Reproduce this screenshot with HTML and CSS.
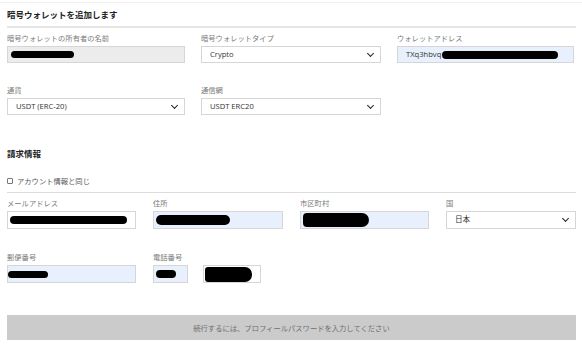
FILE: index.html
```html
<!DOCTYPE html>
<html lang="ja">
<head>
<meta charset="utf-8">
<link rel="stylesheet" href="styles.css">
</head>
<body>
<div class="page">
  <div class="topline"></div>
  <h2 class="title">暗号ウォレットを追加します</h2>
  <div class="grid3">
    <div class="field">
      <div class="label">暗号ウォレットの所有者の名前</div>
      <div class="input disabled"><span class="redact r-name"></span></div>
    </div>
    <div class="field">
      <div class="label">暗号ウォレットタイプ</div>
      <div class="input select"><span class="val">Crypto</span><span class="chev"></span></div>
    </div>
    <div class="field">
      <div class="label">ウォレットアドレス</div>
      <div class="input auto"><span class="val">TXq3hbvq</span><span class="redact r-addr"></span></div>
    </div>
    <div class="field">
      <div class="label">通貨</div>
      <div class="input select"><span class="val">USDT (ERC-20)</span><span class="chev"></span></div>
    </div>
    <div class="field">
      <div class="label">通信網</div>
      <div class="input select"><span class="val">USDT ERC20</span><span class="chev"></span></div>
    </div>
  </div>

  <h2 class="title2">請求情報</h2>
  <label class="check"><span class="box"></span>アカウント情報と同じ</label>
  <div class="grid4">
    <div class="field">
      <div class="label">メールアドレス</div>
      <div class="input white"><span class="redact r-mail"></span></div>
    </div>
    <div class="field">
      <div class="label">住所</div>
      <div class="input auto"><span class="redact r-street"></span></div>
    </div>
    <div class="field">
      <div class="label">市区町村</div>
      <div class="input auto"><span class="redact r-city"></span></div>
    </div>
    <div class="field">
      <div class="label">国</div>
      <div class="input select white"><span class="val">日本</span><span class="chev"></span></div>
    </div>
    <div class="field">
      <div class="label">郵便番号</div>
      <div class="input auto"><span class="redact r-zip"></span></div>
    </div>
    <div class="field">
      <div class="label">電話番号</div>
      <div class="phone">
        <div class="input auto code"><span class="redact r-code"></span></div>
        <div class="input white num"><span class="redact r-num"></span></div>
      </div>
    </div>
  </div>

  <div class="btn">続行するには、プロフィールパスワードを入力してください</div>
</div>
</body>
</html>
```

FILE: styles.css
```css
* { box-sizing: border-box; }
html, body { margin: 0; padding: 0; background: #fff; }
body {
  font-family: "Open Sans", "Noto Sans CJK JP", sans-serif;
  color: #333;
  width: 582px;
  height: 346px;
  overflow: hidden;
}
.page { padding: 0 6px 0 7px; }
.topline { height: 1px; background: #f0f0f0; margin: 2px -7px 0 -7px; }
.title {
  margin: 0;
  font-size: 8.5px;
  font-weight: 700;
  color: #222;
  line-height: 12px;
  padding-top: 6px;
  padding-bottom: 5px;
  border-bottom: 2px solid #e6e6e6;
}
.grid3 {
  display: grid;
  grid-template-columns: 178px 180px 177px;
  column-gap: 16px;
  row-gap: 22px;
  margin-top: 5px;
}
.field { display: flex; flex-direction: column; }
.label {
  font-size: 7.3px;
  color: #7a7a7a;
  line-height: 10px;
  height: 10px;
  margin-bottom: 3px;
}
.input {
  height: 17px;
  border: 1px solid #d6d6d6;
  background: #fff;
  display: flex;
  align-items: center;
  padding: 0 8px;
  font-size: 7.6px;
  color: #333;
  position: relative;
}
.input.disabled { background: #ececec; }
.input.auto { background: #e8f0fe; }
.input.white { background: #fff; }
.val { line-height: 1; white-space: nowrap; }
.chev {
  margin-left: auto;
  width: 5px;
  height: 5px;
  border-right: 1.6px solid #222;
  border-bottom: 1.6px solid #222;
  transform: rotate(45deg);
  margin-top: -3px;
  margin-right: -1px;
}
.redact {
  display: block;
  background: #000;
  border-radius: 6px;
}
.r-name { width: 63px; height: 7px; margin-left: -5px; }
.r-addr { width: 116px; height: 8px; margin-left: 1px; }
.r-mail { width: 124px; height: 8px; margin-left: -6px; }
.r-street { width: 74px; height: 10px; margin-left: -6px; }
.r-city { width: 66px; height: 14px; margin-left: -6px; border-radius: 4px 7px 7px 4px; }
.r-zip { width: 40px; height: 7px; margin-left: -8px; }
.r-code { width: 20px; height: 8px; margin-left: -6px; }
.r-num { width: 48px; height: 15px; margin-left: -7px; border-radius: 3px 7px 7px 3px; }

.title2 {
  margin: 0;
  margin-top: 33px;
  font-size: 8.5px;
  font-weight: 700;
  color: #222;
  line-height: 12px;
}
.check {
  display: flex;
  align-items: center;
  font-size: 7.3px;
  color: #555;
  line-height: 10px;
  margin-top: 16px;
  padding-bottom: 6px;
  border-bottom: 1px solid #dcdcdc;
}
.box {
  width: 6px;
  height: 6px;
  border: 1px solid #777;
  border-radius: 1px;
  margin-right: 4px;
}
.grid4 {
  display: grid;
  grid-template-columns: 129px 130px 129px 130px;
  column-gap: 17px;
  row-gap: 23px;
  margin-top: 5px;
}
.grid4 .input { height: 18px; }
.phone { display: flex; gap: 15px; }
.code { width: 35px; }
.num { width: 58px; padding: 0 8px; }
.btn {
  margin-top: 32px;
  height: 25px;
  background: #cbcbcb;
  color: #6f6f6f;
  font-size: 7.3px;
  display: flex;
  align-items: center;
  justify-content: center;
}
```
